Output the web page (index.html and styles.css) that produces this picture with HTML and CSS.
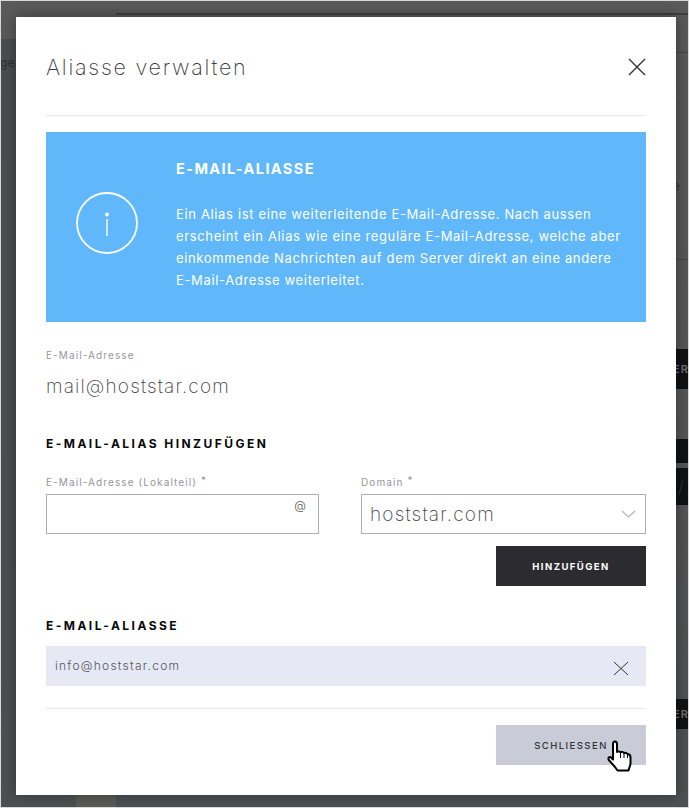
FILE: index.html
```html
<!DOCTYPE html>
<html lang="de">
<head>
<meta charset="utf-8">
<title>Aliasse verwalten</title>
<link rel="stylesheet" href="styles.css">
</head>
<body>
<div class="page">
  <div class="behind" aria-hidden="true">
    <div class="b-top"></div>
    <div class="b-left"></div>
    <div class="b-topline"></div>
    <div class="b-line b-l1"></div>
    <div class="b-line b-l2"></div>
    <div class="b-line b-l3"></div>
    <div class="b-dark b-d1"><span>ER</span></div>
    <div class="b-dark b-d2"></div>
    <div class="b-dark b-d3"><span>/</span></div>
    <div class="b-dark b-d4"><span>ER</span></div>
    <div class="b-patch"></div>
    <span class="b-text b-ge">ge</span>
    <span class="b-text b-te">te</span>
  </div>

  <main class="modal">
    <header class="modal-head">
      <h1 class="modal-title">Aliasse verwalten</h1>
      <svg class="icon-close" width="18" height="18" viewBox="0 0 18 18"><path d="M1 1 17 17M17 1 1 17"/></svg>
    </header>

    <section class="info">
      <div class="info-icon">
        <svg width="62" height="62" viewBox="0 0 62 62"><circle class="ring" cx="31" cy="31" r="30"/><circle class="dot" cx="31" cy="22.500" r="2"/><path class="stem" d="M31 27V44"/></svg>
      </div>
      <div class="info-body">
        <h2 class="info-title">E-MAIL-ALIASSE</h2>
        <p class="info-text">Ein Alias ist eine weiterleitende E-Mail-Adresse. Nach aussen<br>erscheint ein Alias wie eine reguläre E-Mail-Adresse, welche aber<br>einkommende Nachrichten auf dem Server direkt an eine andere<br>E-Mail-Adresse weiterleitet.</p>
      </div>
    </section>

    <div class="current">
      <div class="label">E-Mail-Adresse</div>
      <div class="current-value">mail@hoststar.com</div>
    </div>

    <h3 class="section-title add-title">E-MAIL-ALIAS HINZUFÜGEN</h3>

    <div class="form-row">
      <div class="field field-local">
        <label class="label" for="local">E-Mail-Adresse (Lokalteil) <sup class="req">*</sup></label>
        <div class="input-wrap">
          <input id="local" class="input" type="text">
          <span class="at">@</span>
        </div>
      </div>
      <div class="field field-domain">
        <div class="label">Domain <sup class="req">*</sup></div>
        <div class="select">
          <span class="select-value">hoststar.com</span>
          <svg class="chevron" width="15" height="8" viewBox="0 0 15 8"><path d="M1 1 7.500 7 14 1"/></svg>
        </div>
      </div>
    </div>

    <div class="actions add-action">
      <button class="btn btn-dark" type="button">HINZUFÜGEN</button>
    </div>

    <h3 class="section-title list-title">E-MAIL-ALIASSE</h3>
    <div class="alias-row">
      <span class="alias-name">info@hoststar.com</span>
      <svg class="icon-remove" width="16" height="15" viewBox="0 0 16 15"><path d="M1 1 15 14M15 1 1 14"/></svg>
    </div>

    <hr class="rule">

    <div class="actions close-action">
      <button class="btn btn-grey" type="button">SCHLIESSEN
        <svg class="hand" width="25" height="33" viewBox="0 0 25 33"><path class="hand-fill" d="M6 4Q6 1.500 8 1.500T10 4V12Q12.500 10.500 13.500 12.500 15.500 11 17 13 19 12 20.500 14 23.500 14 23.500 17.500V24L21.500 30.500H10.500L8 27 1.800 20Q0.500 17 3.500 17L6 19.500Z"/><path class="hand-line" d="M13.500 12.500V18M17 13V18M20.500 14V18"/></svg>
      </button>
    </div>
  </main>
</div>
</body>
</html>
```
FILE: styles.css
```css
* { box-sizing: border-box; }
html, body { margin: 0; padding: 0; }
body { font-family: Inter, "Liberation Sans", sans-serif; color: #333; }

.page {
  position: relative;
  width: 689px;
  height: 808px;
  overflow: hidden;
  padding: 16px 12px 12px 15px;
  background: linear-gradient(#5a5a5a 0, #565657 50%, #4f5054 100%);
  border: 1px solid #d8d8d8;
}

/* dimmed page behind the dialog */
.behind { position: absolute; inset: 0; }
.b-top { position: absolute; left: 0; top: 0; right: 0; height: 38px; background: #5a5a5a; }
.b-left { position: absolute; left: 0; top: 38px; width: 16px; bottom: 0; background: linear-gradient(#4c4d51, #4e4f53); }
.b-topline { position: absolute; left: 115px; right: 0; top: 12px; height: 2px; background: #3f3f3f; }
.b-line { position: absolute; left: 660px; right: 0; height: 1px; background: #444; }
.b-l1 { top: 51px; }
.b-l2 { top: 102px; background: #555; }
.b-l3 { top: 258px; }
.b-dark { position: absolute; left: 660px; right: 0; background: #111214; overflow: hidden; }
.b-dark span { position: absolute; left: 15px; top: 50%; transform: translateY(-50%); font-size: 11px; font-weight: 600; color: #6f7072; letter-spacing: 1px; }
.b-d1 { top: 348px; height: 40px; }
.b-d1 span, .b-d4 span { left: 12px; }
.b-d2 { top: 438px; height: 24px; }
.b-d3 { top: 467px; height: 37px; }
.b-d3 span { left: 17px; color: #333; font-size: 16px; font-weight: 300; }
.b-d4 { top: 698px; height: 30px; }
.b-patch { position: absolute; left: 75px; top: 780px; width: 40px; height: 26px; background: #5b5b57; }
.b-text { position: absolute; font-size: 12px; color: #2f3033; letter-spacing: .5px; }
.b-ge { left: -1px; top: 54px; }
.b-te { left: 663px; top: 178px; color: #333; font-family: "Liberation Mono", monospace; font-size: 13px; }

/* dialog */
.modal {
  position: relative;
  width: 660px;
  height: 778px;
  padding: 0 30px;
  background: #fff;
  box-shadow: 0 0 14px rgba(0, 0, 0, .38);
}
.modal-head {
  display: flex;
  align-items: center;
  justify-content: space-between;
  height: 99px;
  padding: 2px 0 0 0;
  border-bottom: 1px solid #e9e9eb;
}
.modal-title { margin: 0; font-size: 21.500px; font-weight: 200; letter-spacing: 1.75px; color: #3b3b3f; }
.icon-close path { fill: none; stroke: #333; stroke-width: 1.4; }

.info {
  display: flex;
  height: 190px;
  margin-top: 16px;
  background: #60b8fa;
  color: #fff;
}
.info-icon { display: flex; align-items: center; width: 130px; padding-left: 30px; }
.info-icon svg { display: block; margin-top: -8px; }
.ring { fill: none; stroke: #fff; stroke-width: 1.8; }
.dot { fill: #fff; }
.stem { stroke: #fff; stroke-width: 1.4; }
.info-title { margin: 28px 0 0; font-size: 14.500px; line-height: 17px; font-weight: 700; letter-spacing: 1.4px; }
.info-text { margin: 26px 0 0; font-size: 13px; line-height: 22px; font-weight: 400; letter-spacing: .65px; white-space: nowrap; }

.label { display: block; font-size: 10px; line-height: 14px; color: #96969a; letter-spacing: 1.1px; }
.req { font-size: 10px; line-height: 0; vertical-align: 2px; }

.current { margin-top: 26px; }
.current-value { margin-top: 13px; font-size: 19px; line-height: 24px; font-weight: 200; letter-spacing: 1.15px; color: #444448; }

.section-title { margin: 0; font-size: 12px; line-height: 14px; font-weight: 700; color: #08080a; letter-spacing: 2.45px; }
.add-title { margin-top: 38px; }
.form-row { display: flex; gap: 42px; margin-top: 24px; }
.field-local { width: 273px; }
.field-domain { width: 285px; }
.field .label { margin-bottom: 5px; }
.input-wrap { position: relative; }
.input { display: block; width: 100%; height: 40px; border: 1px solid #adadb3; border-radius: 0; background: #fff; outline: 0; }
.at { position: absolute; right: 13px; top: 4px; font-size: 12px; line-height: 16px; font-weight: 300; color: #555; }
.select {
  display: flex;
  align-items: center;
  justify-content: space-between;
  height: 40px;
  padding: 0 9px 0 8px;
  border: 1px solid #adadb3;
}
.select-value { font-size: 19px; font-weight: 200; letter-spacing: 1.2px; color: #444448; }
.chevron path { fill: none; stroke: #b4b4b8; stroke-width: 1.2; }

.actions { display: flex; justify-content: flex-end; }
.add-action { margin-top: 12px; }
.btn {
  position: relative;
  width: 150px;
  height: 40px;
  padding: 0;
  border: 0;
  border-radius: 0;
  font-family: Inter, "Liberation Sans", sans-serif;
  font-size: 9.500px;
}
.btn-dark { background: #2c2c30; color: #fff; font-weight: 700; letter-spacing: 1.45px; }
.btn-grey { background: #c9ccd6; color: #33333a; font-weight: 500; letter-spacing: 1.45px; }

.list-title { margin-top: 33px; }
.alias-row {
  display: flex;
  align-items: center;
  justify-content: space-between;
  height: 40px;
  margin-top: 13px;
  padding: 0 17px 0 9px;
  background: #e6e9f3;
}
.alias-name { margin-top: -2px; font-size: 12px; letter-spacing: 1.25px; color: #55555c; font-weight: 300; }
.icon-remove { margin-top: 4px; }
.icon-remove path { fill: none; stroke: #333; stroke-width: 1; }

.rule { height: 1px; margin: 22px 0 0; border: 0; background: #e9e9eb; }
.close-action { margin-top: 16px; }
.hand { position: absolute; left: 111px; top: 15px; }
.hand-fill { fill: #fff; stroke: #000; stroke-width: 2; stroke-linejoin: round; }
.hand-line { fill: none; stroke: #000; stroke-width: 1; }
```
